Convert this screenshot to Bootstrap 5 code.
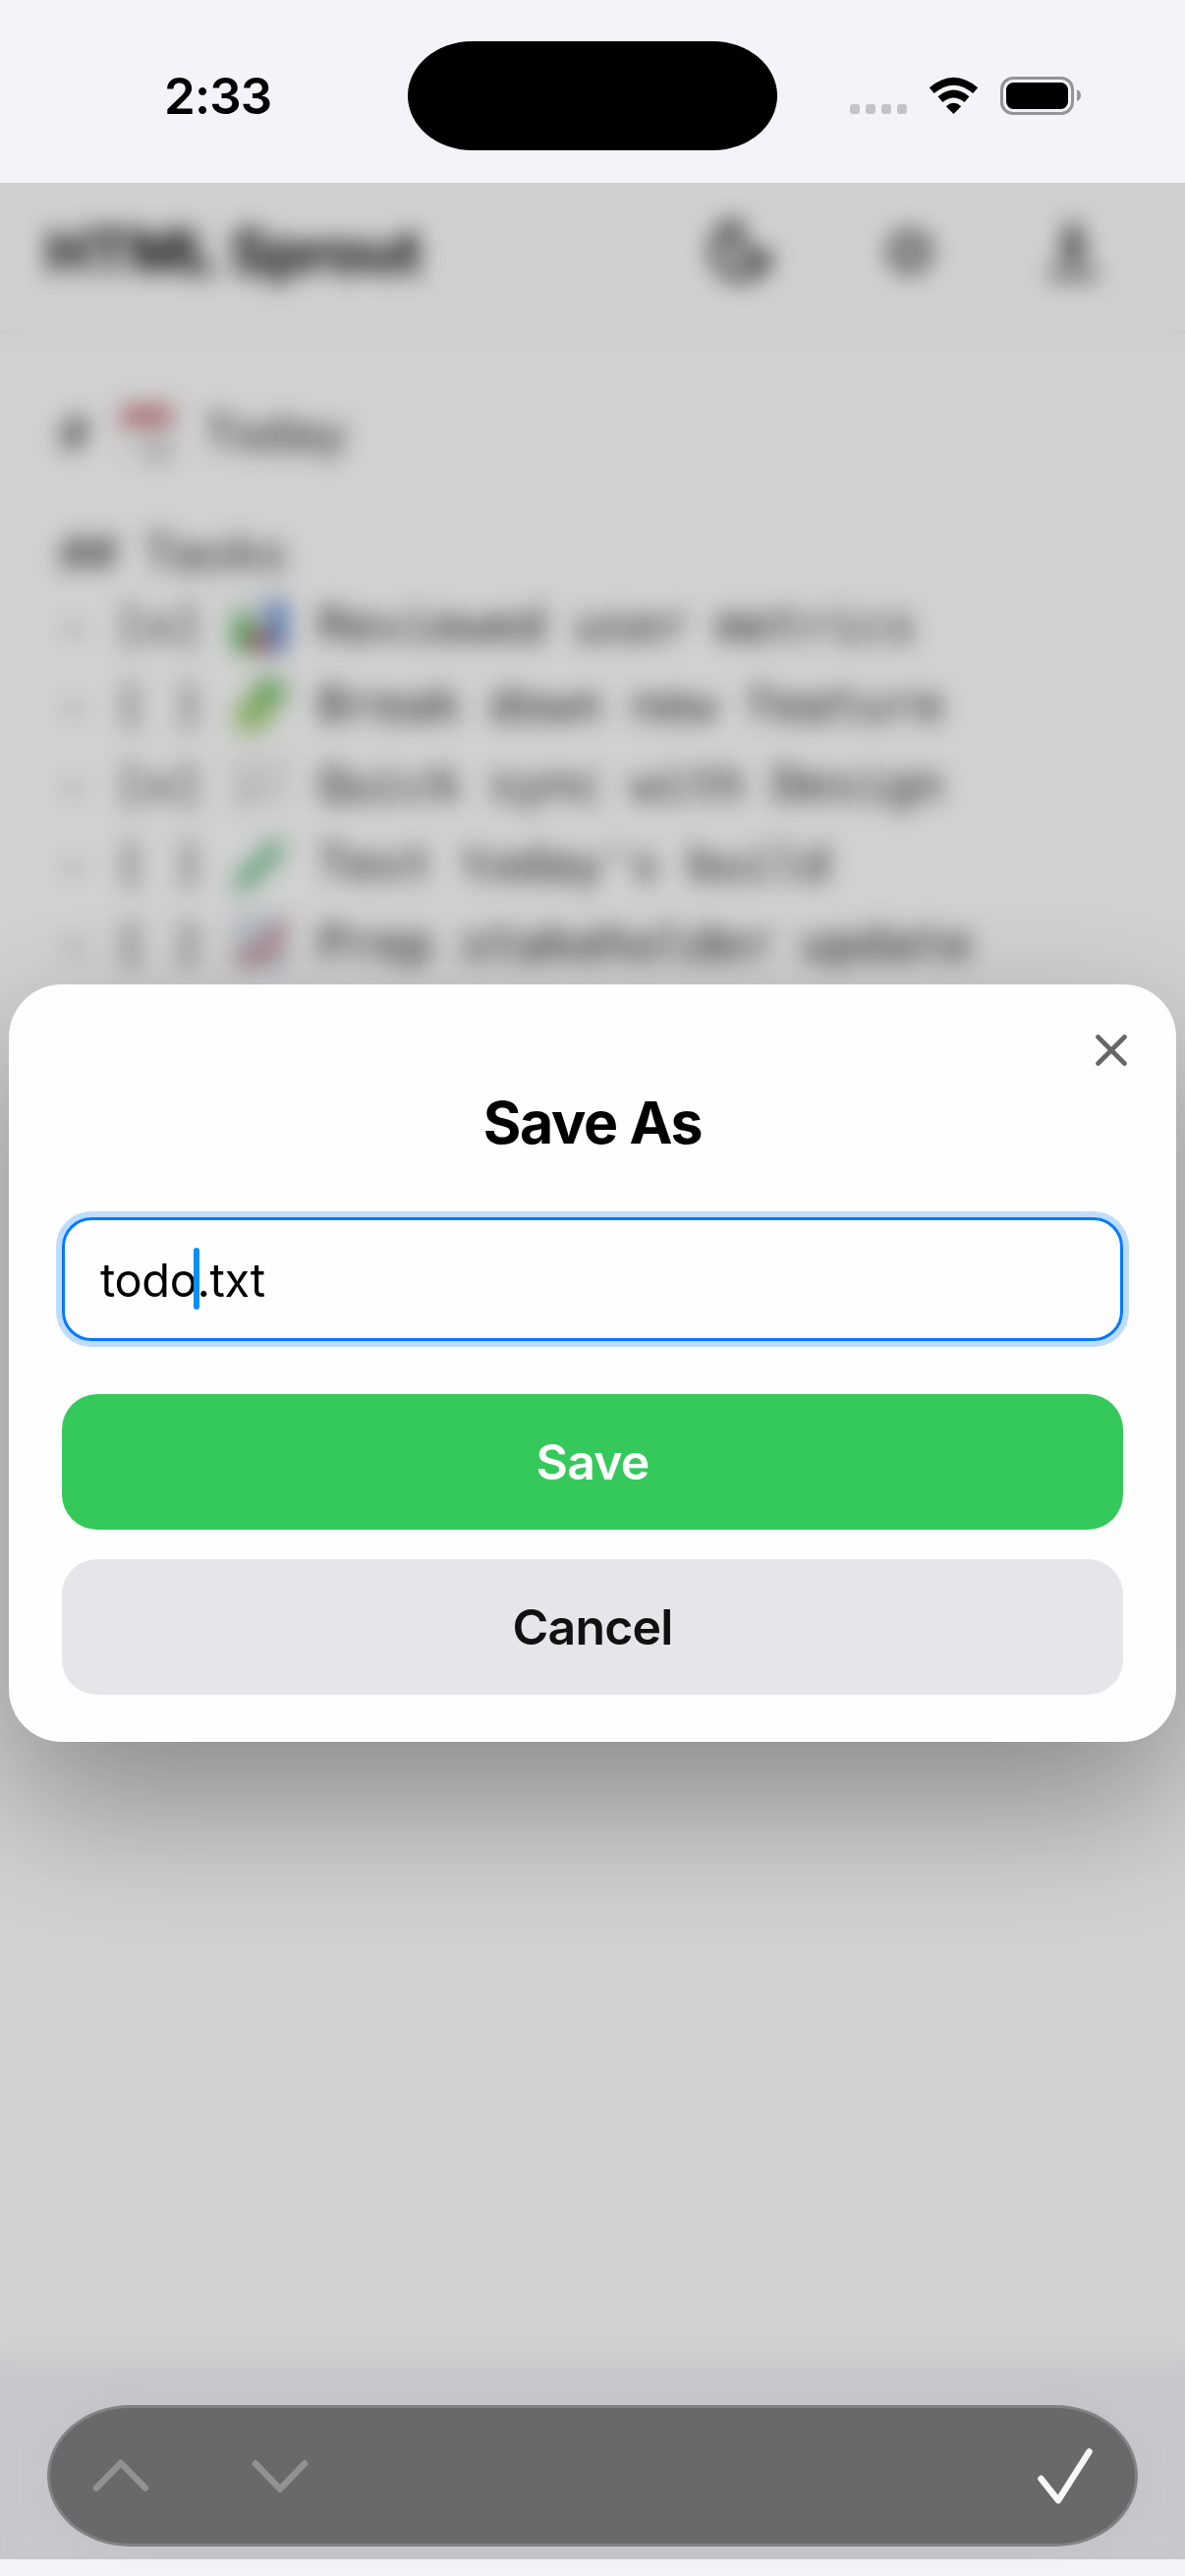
<!DOCTYPE html>
<html lang="en">
<head>
    <meta charset="utf-8">
    <meta name="viewport" content="width=device-width, initial-scale=1.0">
    <title>HTML Sprout</title>

    <link rel="stylesheet" href="https://cdn.jsdelivr.net/npm/bootstrap@5.3.0/dist/css/bootstrap.min.css">
    <style>
        body { background-color: #f4f3f9; color: #000; font-family: Inter, "Liberation Sans", sans-serif; height: 2622px; overflow: hidden; }
        svg { display: block; flex: none; }

        .status-bar { height: 186px; padding: 0 106px 0 167px; }
        .clock { width: 248px; font-size: 51px; font-weight: 600; line-height: 1; letter-spacing: -0.9px; margin-top: 9px; }
        .island { width: 376px; height: 111px; border-radius: 66px / 56px; background: #000; margin-top: 8px; }
        .status-icons { margin-top: 9px; }

        .app-header { height: 154px; padding: 0 84px 12px 47px; background: #fefefe; border-bottom: 3px solid #efeff2; }
        .app-title { font-size: 60px; font-weight: 700; letter-spacing: -0.3px; }
        .app-tools { gap: 106px; }

        .editor { height: 2062px; background: #fff; padding: 60px; font-family: "DejaVu Sans Mono", "Liberation Mono", monospace; font-size: 48px; color: #1c1c1e; }
        .line { height: 81px; white-space: pre; padding-left: 1px; }
        .line-plain { height: 65px; }
        .line-blank { height: 49px; }
        .line svg { opacity: 0.8; }

        .scrim { top: 186px; height: 2419px; padding: 816px 9px 0; background: rgba(0, 0, 0, 0.18); backdrop-filter: blur(12px); overflow: hidden; }
        .dialog { height: 771px; padding: 51px 54px 48px; background: #fefefe; border-radius: 54px; box-shadow: 0 60px 150px rgba(0, 0, 0, 0.35); }
        .dialog-close { height: 32px; margin-right: -4px; }
        .dialog-title { font-size: 59px; font-weight: 700; line-height: 72px; letter-spacing: -1.3px; margin: 22px 0 60px; }
        .filename { height: 126px; padding-left: 36px; font-size: 47px; border: 3px solid #007aff; border-radius: 30px; box-shadow: 0 0 0 6px #bddcff; letter-spacing: -0.4px; margin-bottom: 54px; }
        .filename .name-part { position: relative; top: 1px; }
        .caret { width: 6px; height: 63px; border-radius: 3px; background: #0091ff; margin: 0 -3px 0 -3px; position: relative; top: -1px; }
        .btn-big { height: 138px; border: none; border-radius: 36px; font-size: 50px; font-weight: 600; letter-spacing: -0.8px; }
        .btn-save, .btn-save:hover { background: #35c95b; color: #fff; }
        .btn-cancel, .btn-cancel:hover { background: #e5e5ea; color: #111; }

        .accessory { left: 48px; right: 48px; bottom: 30px; height: 144px; padding: 0 43px; border: 3px solid #828285; border-radius: 84px / 72px; background: #69696b; box-shadow: 0 0 60px rgba(0, 0, 0, 0.03); }
        .accessory-nav { gap: 104px; }
    </style>
</head>
<body class="d-flex flex-column position-relative">

<div class="status-bar d-flex align-items-center">
    <div class="clock">2:33</div>
    <div class="island"></div>
    <div class="status-icons ms-auto">
        <svg width="235" height="39" viewBox="865 78 235 39">
            <g fill="#c4c3c8">
                <rect x="865" y="106" width="10" height="10" rx="3"/>
                <rect x="881" y="106" width="10" height="10" rx="3"/>
                <rect x="897" y="106" width="10" height="10" rx="3"/>
                <rect x="913" y="106" width="10" height="10" rx="3"/>
            </g>
            <path d="M948.300 92.200Q970.500 73.200 992.700 92.200M957.000 101.200Q970.500 89.800 984.000 101.200" fill="none" stroke="#000" stroke-width="7.600"/>
            <path d="M970.500 116L962.800 108.200Q970.500 101.400 978.200 108.200Z"/>
            <rect x="1019.500" y="79.500" width="72" height="36" rx="11.500" fill="none" stroke="#949397" stroke-width="3"/>
            <rect x="1024" y="84" width="63" height="27" rx="7.500"/>
            <path d="M1096 91Q1100 93 1100 97Q1100 101 1096 103Z" fill="#949397"/>
        </svg>
    </div>
</div>

<header class="app-header d-flex align-items-center justify-content-between">
    <div class="app-title">HTML Sprout</div>
    <div class="app-tools d-flex align-items-center">
        <svg width="68" height="64" viewBox="0 0 68 64"><path d="M27 4A27 27 0 1 0 59 36L46 40L31 28Z" fill="none" stroke="#222" stroke-width="9" stroke-linejoin="round"/></svg>
        <svg width="60" height="60" viewBox="0 0 60 60"><circle cx="30" cy="30" r="16" fill="none" stroke="#444" stroke-width="9"/><path d="M30 6V12M30 48V54M6 30H12M48 30H54M13 13L17 17M43 43L47 47M47 13L43 17M17 43L13 47" stroke="#444" stroke-width="5"/></svg>
        <svg width="60" height="64" viewBox="0 0 60 64"><path d="M25 2H35V24H46L30 44L14 24H25Z" fill="#222"/><path d="M5 50H55V59H5Z" fill="#444"/></svg>
    </div>
</header>

<main class="editor">
    <div class="line d-flex align-items-center"><span># </span>
        <svg width="61" height="66" viewBox="0 0 61 66"><rect x="4" y="5" width="53" height="56" rx="6" fill="#f2f2f2"/><path d="M4 9Q4 5 8 5H53Q57 5 57 9V25H4Z" fill="#b85860"/><path d="M31 59V43H57V52L47 61H31Z" fill="#b4b4b4"/></svg>
        <span> Today</span></div>
    <div class="line-blank"></div>
    <div class="line line-plain d-flex align-items-center">## Tasks</div>
    <div class="line d-flex align-items-center"><span>- [x] </span>
        <svg width="61" height="66" viewBox="0 0 61 66"><rect x="2" y="4" width="57" height="58" rx="3" fill="#e8f0f2"/><path d="M5 22H21V61H5Z" fill="#199a1e"/><path d="M23 38H38V61H23Z" fill="#b72323"/><path d="M40 8H56V61H40Z" fill="#1855b8"/></svg>
        <span> Reviewed user metrics</span></div>
    <div class="line d-flex align-items-center"><span>- [ ] </span>
        <svg width="61" height="66" viewBox="0 0 61 66"><path d="M8 34L18 26L24 14L36 4L50 6L58 16L55 30L46 36L42 48L30 60L14 62L4 52Z" fill="#8ac455"/><path d="M24 14L36 4L50 6L58 16L55 30L46 36L34 30Z" fill="#5fb050"/></svg>
        <span> Break down new feature</span></div>
    <div class="line d-flex align-items-center"><span>- [x] </span>
        <svg width="61" height="66" viewBox="0 0 61 66"><path d="M4 8H57V46H30L12 61V46H4Z" fill="#eee" stroke="#d4d4d4" stroke-width="4"/><path d="M12 34H22V46H12ZM27 34H35V42H27Z" fill="#aaa"/></svg>
        <span> Quick sync with Design</span></div>
    <div class="line d-flex align-items-center"><span>- [ ] </span>
        <svg width="61" height="66" viewBox="0 0 61 66"><path d="M12 54L47 17" stroke="#48ab6b" stroke-width="17" stroke-linecap="round"/></svg>
        <span> Test today's build</span></div>
    <div class="line d-flex align-items-center"><span>- [ ] </span>
        <svg width="61" height="66" viewBox="0 0 61 66"><rect x="3" y="4" width="55" height="58" fill="#d5e0ea"/><path d="M3 18H58M3 33H58M3 48H58M18 4V62M33 4V62M48 4V62" stroke="#a8bccb" stroke-width="2"/><path d="M8 53L25 42L37 45L54 12" fill="none" stroke="#bf5b68" stroke-width="11"/></svg>
        <span> Prep stakeholder update</span></div>
</main>

<div class="scrim position-absolute start-0 w-100">
    <div class="dialog d-flex flex-column">
        <div class="dialog-close d-flex justify-content-end">
            <svg width="32" height="32" viewBox="0 0 32 32"><path d="M2.500 2.500L29.500 29.500M29.500 2.500L2.500 29.500" stroke="#666" stroke-width="4.600" stroke-linecap="round"/></svg>
        </div>
        <h1 class="dialog-title text-center">Save As</h1>
        <div class="filename d-flex align-items-center"><span class="name-part">todo</span><span class="caret"></span><span class="name-part">.txt</span></div>
        <div class="d-grid" style="gap: 30px">
            <button type="button" class="btn btn-big btn-save p-0">Save</button>
            <button type="button" class="btn btn-big btn-cancel p-0">Cancel</button>
        </div>
    </div>
</div>

<div class="accessory position-absolute d-flex align-items-center justify-content-between">
    <div class="accessory-nav d-flex align-items-center">
        <svg width="58" height="34" viewBox="0 0 58 34"><path d="M4 29.500L29 4L54 29.500" fill="none" stroke="#929292" stroke-width="6.500" stroke-linecap="round" stroke-linejoin="round"/></svg>
        <svg width="58" height="34" viewBox="0 0 58 34"><path d="M4 4.500L29 30.500L54 4.500" fill="none" stroke="#929292" stroke-width="6.500" stroke-linecap="round" stroke-linejoin="round"/></svg>
    </div>
    <svg width="56" height="58" viewBox="0 0 56 58"><path d="M3.500 32L21 54L52.500 4.500" fill="none" stroke="#f8f8fa" stroke-width="6.500" stroke-linecap="round" stroke-linejoin="round"/></svg>
</div>

<script src="https://cdn.jsdelivr.net/npm/bootstrap@5.3.0/dist/js/bootstrap.bundle.min.js"></script>
</body>
</html>
